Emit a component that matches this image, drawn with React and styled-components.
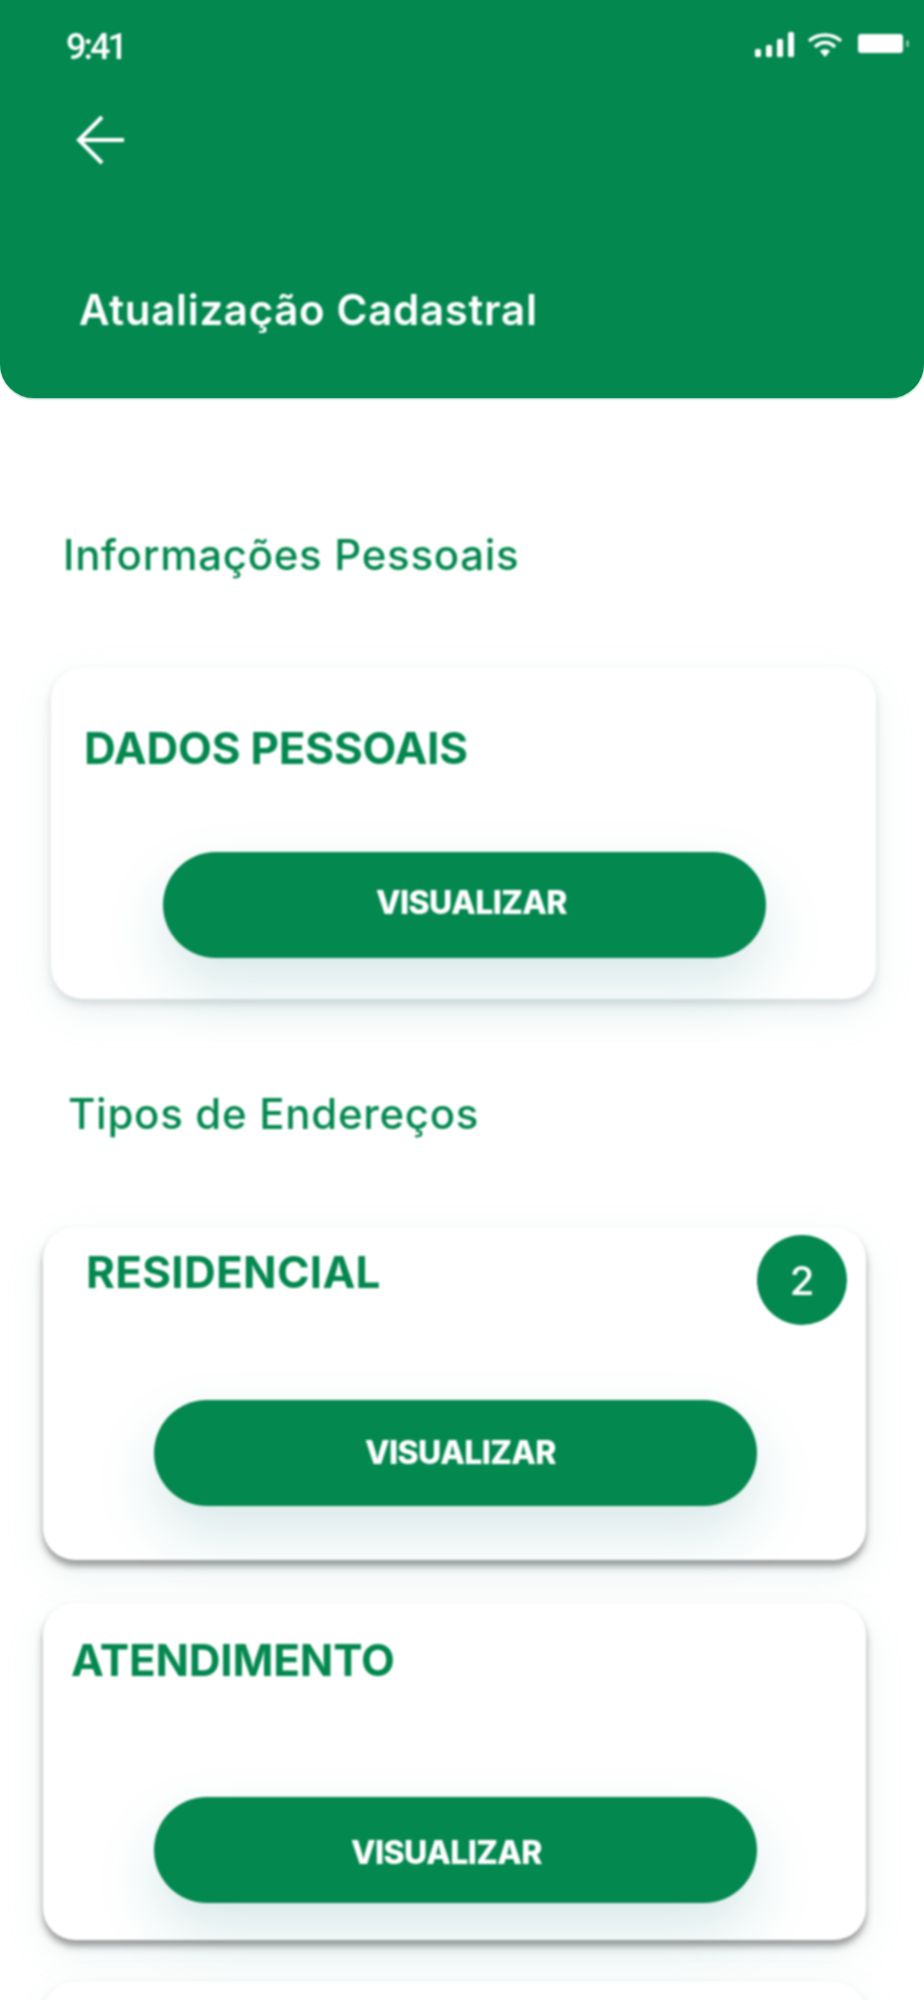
import React from 'react'
import styled, { createGlobalStyle } from 'styled-components'

const GREEN = '#03884f'
const SOFT = 'blur(0.9px)'

const Global = createGlobalStyle`
  html, body { margin: 0; padding: 0; background: #fff; }
  #root { height: 2000px; overflow: hidden; }
  * { box-sizing: border-box; }
`

const Page = styled.div`
  width: 924px;
  height: 2000px;
  overflow: hidden;
  background: #fff;
  font-family: Inter, "Open Sans", sans-serif;
`
const Header = styled.header`
  height: 398px;
  background: ${GREEN};
  border-radius: 0 0 34px 34px;
  padding: 32px 14px 0 66px;
  color: #fff;
  box-shadow: 0 1px 2px rgba(3, 136, 79, .5);
`
const StatusBar = styled.div`
  display: flex;
  justify-content: space-between;
  align-items: flex-start;
  height: 30px;
  filter: ${SOFT};
`
const Clock = styled.span`
  font-family: Roboto, sans-serif;
  font-size: 36px;
  font-weight: 500;
  line-height: 30px;
  letter-spacing: -3px;
`
const StatusIcons = styled.div`
  display: flex;
  align-items: flex-start;
  gap: 11px;
`
const BackButton = styled.button`
  display: block;
  margin: 52px 0 0 8px;
  padding: 0;
  border: 0;
  background: none;
  height: 52px;
  width: 52px;
  filter: ${SOFT};
`
const Title = styled.h1`
  margin: 119px 0 0 13px;
  font-size: 42px;
  line-height: 50px;
  font-weight: 600;
  letter-spacing: 0.7px;
  white-space: nowrap;
  filter: ${SOFT};
`
const Section = styled.h2`
  margin: ${p => p.$top}px 0 0 ${p => p.$left}px;
  color: ${GREEN};
  font-size: 42px;
  line-height: 46px;
  font-weight: 500;
  letter-spacing: 0.7px;
  filter: ${SOFT};
`
const Card = styled.section`
  position: relative;
  width: ${p => p.$width}px;
  height: ${p => p.$height}px;
  margin: ${p => p.$top}px 0 0 ${p => p.$left}px;
  padding: ${p => p.$padTop}px 0 0 ${p => p.$padLeft}px;
  background: #fff;
  border-radius: 32px;
  filter: ${SOFT};
  box-shadow: ${p => p.$dark
    ? '0 6px 7px rgba(60, 60, 60, .5), 0 14px 40px rgba(120, 170, 170, .12)'
    : '0 5px 9px rgba(90, 110, 110, .22), 0 14px 40px rgba(120, 170, 170, .12)'};
`
const CardTitle = styled.h3`
  margin: 0;
  color: ${GREEN};
  font-size: 44px;
  line-height: 48px;
  font-weight: 700;
  letter-spacing: ${p => p.$spacing}px;
  white-space: nowrap;
`
const ViewButton = styled.button`
  position: absolute;
  left: ${p => p.$left}px;
  bottom: ${p => p.$bottom}px;
  width: 603px;
  height: 106px;
  padding: 0;
  border: 0;
  border-radius: 53px;
  background: ${GREEN};
  color: #fff;
  font-family: Inter, sans-serif;
  font-size: 32px;
  font-weight: 800;
  letter-spacing: -0.6px;
  box-shadow: 0 28px 60px rgba(30, 125, 125, .17);
`
const ButtonLabel = styled.span`
  display: inline-block;
  transform: translate(${p => p.$shift}px, ${p => p.$lift}px);
`
const Badge = styled.span`
  position: absolute;
  top: 8px;
  right: 19px;
  width: 90px;
  height: 90px;
  border-radius: 50%;
  background: ${GREEN};
  color: #fff;
  display: flex;
  align-items: center;
  justify-content: center;
  font-size: 40px;
  font-weight: 500;
`

const Signal = () => (
  <svg width="41" height="25" viewBox="0 0 41 25" fill="#fff">
    <rect x="0" y="17" width="6" height="8" rx="1.5" />
    <rect x="11" y="13" width="6" height="12" rx="1.5" />
    <rect x="22" y="7" width="6" height="18" rx="1.5" />
    <rect x="33" y="0" width="6" height="25" rx="1.5" />
  </svg>
)
const Wifi = () => (
  <svg width="36" height="26" viewBox="0 0 36 26" fill="none" stroke="#fff" strokeWidth="3.5">
    <path d="M2 9 C 11 1, 25 1, 34 9" />
    <path d="M8 15 C 14 9, 22 9, 28 15" />
    <path d="M18 25 L13 19 C 15.5 16.5, 20.5 16.5, 23 19 Z" fill="#fff" stroke="none" />
  </svg>
)
const Battery = () => (
  <svg width="56" height="22" viewBox="0 0 56 22" fill="#fff">
    <rect x="4" y="2" width="45" height="19" rx="3" />
    <rect x="52" y="8" width="3" height="7" rx="1.5" opacity=".5" />
  </svg>
)
const BackArrow = () => (
  <svg width="52" height="52" viewBox="0 0 52 52" fill="none" stroke="#fff" strokeWidth="4">
    <path d="M28 3 L5 26 L28 49" />
    <path d="M5 26 H50" />
  </svg>
)

const ActionCard = ({ title, spacing = -0.2, buttonLeft, buttonBottom, shift, lift, badge, ...rest }) => (
  <Card {...rest}>
    <CardTitle $spacing={spacing}>{title}</CardTitle>
    {badge && <Badge>{badge}</Badge>}
    <ViewButton $left={buttonLeft} $bottom={buttonBottom}>
      <ButtonLabel $shift={shift} $lift={lift}>VISUALIZAR</ButtonLabel>
    </ViewButton>
  </Card>
)

export default function App() {
  return (
    <Page>
      <Global />
      <Header>
        <StatusBar>
          <Clock>9:41</Clock>
          <StatusIcons>
            <Signal />
            <Wifi />
            <Battery />
          </StatusIcons>
        </StatusBar>
        <BackButton><BackArrow /></BackButton>
        <Title>Atualização Cadastral</Title>
      </Header>

      <Section $top={134} $left={63}>Informações Pessoais</Section>
      <ActionCard title="DADOS PESSOAIS" $width={825} $height={331} $top={90} $left={51}
        $padTop={56} $padLeft={33} buttonLeft={112} buttonBottom={41} shift={7} lift={-3} />

      <Section $top={92} $left={68}>Tipos de Endereços</Section>
      <ActionCard title="RESIDENCIAL" spacing={0.3} $width={823} $height={333} $top={90} $left={43}
        $padTop={21} $padLeft={43} buttonLeft={111} buttonBottom={54} shift={5} lift={-1} badge="2" $dark />
      <ActionCard title="ATENDIMENTO" $width={823} $height={337} $top={43} $left={43}
        $padTop={33} $padLeft={28} buttonLeft={111} buttonBottom={37} shift={-9} lift={2} $dark />
      <Card $width={823} $height={200} $top={42} $left={43} $padTop={0} $padLeft={0} />
    </Page>
  )
}
